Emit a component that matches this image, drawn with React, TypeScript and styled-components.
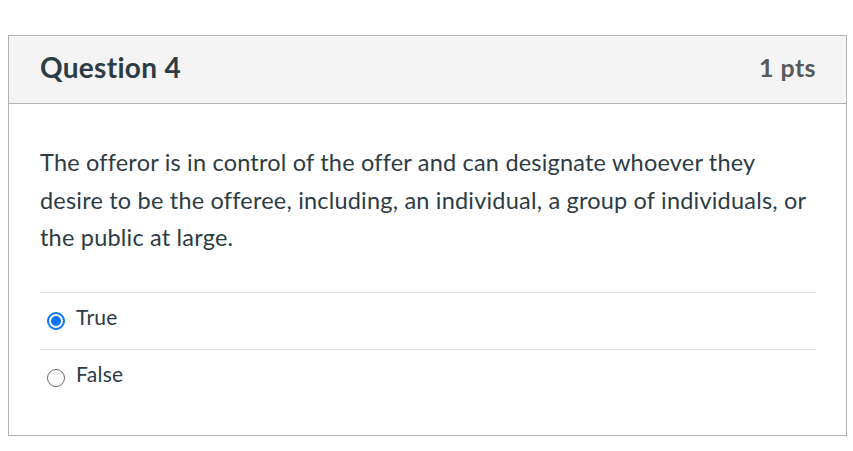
import React, { useState } from "react";
import styled, { createGlobalStyle } from "styled-components";

const GlobalStyle = createGlobalStyle`
  body {
    margin: 0;
    background: #fff;
    font-family: Lato, "Liberation Sans", sans-serif;
    color: #2d3b45;
  }
`;

const Page = styled.div`
  padding: 35px 6px 15px 8px;
`;

const Card = styled.div`
  border: 1px solid #b0b4b7;
`;

const Header = styled.div`
  display: flex;
  align-items: center;
  justify-content: space-between;
  box-sizing: border-box;
  height: 68px;
  padding: 0 30px 5px 31px;
  background: #f4f4f4;
  border-bottom: 1px solid #b0b4b7;
`;

const Title = styled.h2`
  margin: 0;
  font-size: 28px;
  font-weight: 700;
  letter-spacing: 0.3px;
  color: #2d3b45;
`;

const Points = styled.span`
  font-size: 25px;
  font-weight: 700;
  letter-spacing: 0.4px;
  color: #565a5e;
`;

const Body = styled.div`
  padding: 40px 30px 29px 31px;
`;

const Prompt = styled.p`
  margin: 0 0 35px;
  font-size: 23.5px;
  line-height: 37.5px;
  letter-spacing: 0.2px;
  color: #2d3b45;
`;

const Answers = styled.div`
  display: flex;
  flex-direction: column;
`;

const Answer = styled.label`
  display: flex;
  align-items: center;
  gap: 11px;
  height: 56px;
  padding-left: 7px;
  border-top: 1px solid #dcdfe1;
  cursor: pointer;
  font-size: 21px;
  letter-spacing: 0.3px;
  color: #2d3b45;
`;

const AnswerText = styled.span`
  margin-bottom: 9px;
`;

const Radio = styled.span<{ checked: boolean }>`
  flex: none;
  width: 18px;
  height: 18px;
  box-sizing: border-box;
  border-radius: 50%;
  border: ${(p) => (p.checked ? "2px solid #0b74ff" : "1.5px solid #6b6f72")};
  display: flex;
  align-items: center;
  justify-content: center;
  &::after {
    content: "";
    width: 10px;
    height: 10px;
    border-radius: 50%;
    background: ${(p) => (p.checked ? "#0b74ff" : "transparent")};
  }
`;

const options = ["True", "False"];

export default function App() {
  const [selected, setSelected] = useState("True");
  return (
    <>
      <GlobalStyle />
      <Page>
        <Card>
          <Header>
            <Title>Question 4</Title>
            <Points>1 pts</Points>
          </Header>
          <Body>
            <Prompt>
              The offeror is in control of the offer and can designate whoever they
              desire to be the offeree, including, an individual, a group of
              individuals, or the public at large.
            </Prompt>
            <Answers>
              {options.map((o) => (
                <Answer key={o} onClick={() => setSelected(o)}>
                  <Radio checked={selected === o} />
                  <AnswerText>{o}</AnswerText>
                </Answer>
              ))}
            </Answers>
          </Body>
        </Card>
      </Page>
    </>
  );
}
